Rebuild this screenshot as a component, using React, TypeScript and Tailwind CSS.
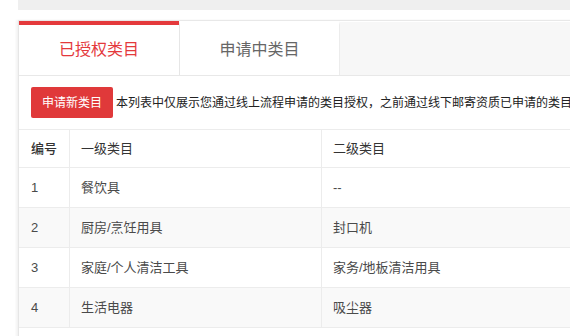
import React, { useState } from 'react';

// Rows shown in the authorised-category table
const rows = [
  { id: 1, level1: '餐饮具', level2: '--' },
  { id: 2, level1: '厨房/烹饪用具', level2: '封口机' },
  { id: 3, level1: '家庭/个人清洁工具', level2: '家务/地板清洁用具' },
  { id: 4, level1: '生活电器', level2: '吸尘器' },
];

const tabs = ['已授权类目', '申请中类目'];

const App: React.FC = () => {
  const [active, setActive] = useState(0);

  return (
    <div
      className="w-[570px] h-[336px] overflow-hidden bg-white pl-[18px]"
      style={{ fontFamily: '"Liberation Sans", "Noto Sans CJK SC", sans-serif' }}
    >
      <div className="w-[700px]">
        <div className="h-[10px] bg-[#efefef]" />
        <div className="h-[10px]" />

        {/* Panel with the tabs and the table */}
        <div className="border-t border-[#e8e8e8] border-l border-l-[#e6e6e6] shadow-[-2px_0_2px_rgba(0,0,0,0.05)] h-[320px]">
          <div className="flex border-b border-[#e8e8e8]">
            {tabs.map((label, i) => (
              <button
                key={label}
                onClick={() => setActive(i)}
                className={
                  i === active
                    ? 'w-[160px] h-[54px] border-t-4 border-[#e4393c] bg-white text-[16px] text-[#e4393c] flex items-center justify-center'
                    : 'w-[161px] h-[54px] border-t-4 border-white border-l border-r border-l-[#e6e6e6] border-r-[#ececec] bg-white text-[16px] text-[#666] flex items-center justify-center'
                }
              >
                {label}
              </button>
            ))}
            <div className="flex-1 mt-[1px] bg-[#f7f7f7]" />
          </div>

          <div className="flex items-center pl-[12px] pt-[11px] pb-[11px] border-b border-[#ececec]">
            <button className="h-[31px] px-[11px] rounded-[2px] bg-[#e0393a] text-white text-[12px]">
              申请新类目
            </button>
            <span className="ml-[3px] text-[12px] text-[#222] whitespace-nowrap">
              本列表中仅展示您通过线上流程申请的类目授权，之前通过线下邮寄资质已申请的类目不在此列表中展示
            </span>
          </div>

          {/* Table */}
          <div className="text-[13px]">
            <div className="grid grid-cols-[51px_252px_1fr] h-[38px] border-b border-[#ececec] text-[#333]">
              <div className="flex items-center pl-[12px] border-r border-[#ececec] font-medium">编号</div>
              <div className="flex items-center pl-[11px] border-r border-[#ececec]">一级类目</div>
              <div className="flex items-center pl-[11px]">二级类目</div>
            </div>
            {rows.map((row, i) => (
              <div
                key={row.id}
                className={
                  'grid grid-cols-[51px_252px_1fr] h-[40px] border-b border-[#ececec] text-[#4a4a4a] ' +
                  (i % 2 === 1 ? 'bg-[#f9f9f9]' : 'bg-white')
                }
              >
                <div className="flex items-center pl-[12px] border-r border-[#ececec]">{row.id}</div>
                <div className="flex items-center pl-[11px] border-r border-[#ececec]">{row.level1}</div>
                <div className="flex items-center pl-[11px]">{row.level2}</div>
              </div>
            ))}
          </div>
        </div>
      </div>
    </div>
  );
};

export default App;
